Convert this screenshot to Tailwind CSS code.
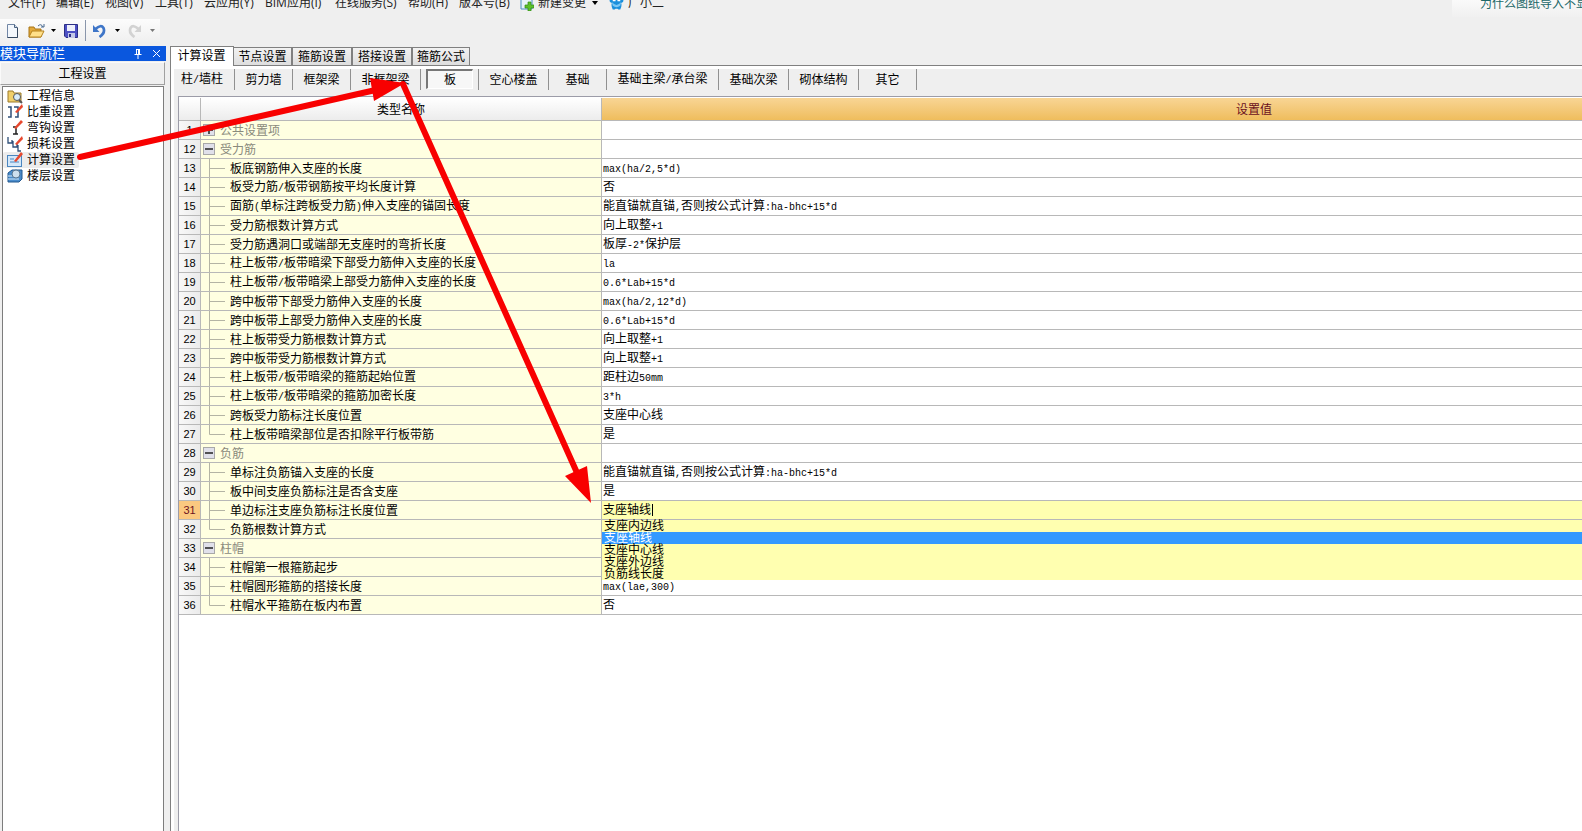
<!DOCTYPE html>
<html lang="zh-CN">
<head>
<meta charset="utf-8">
<title>计算设置</title>
<script src="https://cdn.jsdelivr.net/npm/@tailwindcss/browser@4"></script>
</head>
<body class="relative flex h-screen flex-col overflow-hidden bg-[#efefef] font-['Liberation_Sans','Noto_Sans_CJK_SC',sans-serif] text-xs text-black">

<header class="flex h-[46px] shrink-0 flex-col">
  <div class="flex h-[19px] items-start font-['Open_Sans','Noto_Sans_CJK_SC',sans-serif] text-[#222]">
    <nav class="-mt-[5px] flex h-4 items-center gap-[10px] pl-2 leading-4 whitespace-nowrap">
      <button class="w-[38px] text-left">文件(F)</button>
      <button class="w-[39px] text-left">编辑(E)</button>
      <button class="w-[40px] text-left">视图(V)</button>
      <button class="w-[39px] text-left">工具(T)</button>
      <button class="w-[51px] text-left">云应用(Y)</button>
      <button class="w-[60px] text-left">BIM应用(I)</button>
      <button class="w-[63px] text-left">在线服务(S)</button>
      <button class="w-[41px] text-left">帮助(H)</button>
      <button class="w-[51px] text-left">版本号(B)</button>
      <button class="flex items-center gap-1">
        <svg width="14" height="16" viewBox="0 0 14 16"><path d="M1 0h9l2 3v11H1z" fill="#e6f2fb" stroke="#4b8fc4"/><path d="M8 7h3v3h3v3h-3v3H8v-3H5v-3h3z" fill="#5cc02c" stroke="#2f8a18" stroke-width=".7"/></svg>
        <span>新建变更</span>
        <svg class="ml-[2px]" width="6" height="4" viewBox="0 0 6 4"><path d="M0 0h6L3 4z" fill="#000"/></svg>
      </button>
      <button class="flex items-center gap-1 pl-px">
        <svg width="15" height="16" viewBox="0 0 16 16"><path d="M0 2q8-6 16 0l-1 5-2 1q1 3-1 7l-2 0-1-1H7l-1 1H4q-2-4-1-7L1 7z" fill="#1b8fdc"/><path d="M3 7q5 6 10 0l-1 4q-4 3-8 0z" fill="#7cc8f5"/><path d="M4 5h3M9 5h3" stroke="#fff" stroke-width="2"/></svg>
        <span>广小二</span>
      </button>
    </nav>
    <div class="ml-auto h-[17px] w-[130px] overflow-hidden bg-linear-to-b from-[#fafafa] to-[#f0f0f0] pl-[28px]">
      <a href="#" class="-mt-[4px] block leading-4 whitespace-nowrap text-[#1c6868]">为什么图纸导入不显示</a>
    </div>
  </div>
  <div class="flex h-[23px] w-40 items-center bg-linear-to-b from-[#fcfcfc] to-[#f0f0f0] pl-[6px]">
    <button aria-label="新建"><svg width="14" height="16" viewBox="0 0 14 16"><path d="M1.500 1.500h7l3 3v10h-10z" fill="#f3f7fc" stroke="#7186a5"/><path d="M11.500 5v9.500h-10" stroke="#34475f" fill="none"/><path d="M8.500 1.500v3h3" fill="#cfdcec" stroke="#4c6380"/></svg></button>
    <button class="ml-2 flex items-center gap-[6px]" aria-label="打开"><svg width="17" height="16" viewBox="0 0 17 16"><path d="M1 4h5l1 2h6v8H1z" fill="#e3a93a" stroke="#a87414"/><path d="M4 8h12l-3 6H1z" fill="#ffe08a" stroke="#b5821f"/><path d="M10 3q3-3 5 1M13 4h3V1" fill="none" stroke="#48688f"/></svg><svg width="5" height="3" viewBox="0 0 5 3"><path d="M0 0h5L2.500 3z"/></svg></button>
    <button class="ml-2" aria-label="保存"><svg width="14" height="14" viewBox="0 0 14 14"><path d="M.5.500h13v13H2l-1.500-1.500z" fill="#4d50c4" stroke="#2c2f86"/><path d="M3 1h8v6H3z" fill="#eef0fb"/><path d="M4 9h7v5H4z" fill="#c3c8e8"/><path d="M5 10h2v3H5z" fill="#2c2f86"/></svg></button>
    <span class="mr-[7px] ml-[7px] h-[21px] w-px bg-[#8a96ab]"></span>
    <button class="flex items-center gap-[9px]" aria-label="撤销"><svg width="13" height="14" viewBox="0 0 13 14"><path d="M2.500 5Q8 0 10.500 4q2 5-4 9" fill="none" stroke="#3f76c8" stroke-width="2.700"/><path d="M0 1v7h6.500z" fill="#3f76c8"/></svg><svg width="5" height="3" viewBox="0 0 5 3"><path d="M0 0h5L2.500 3z"/></svg></button>
    <button class="ml-[8px] flex items-center gap-[9px]" aria-label="重做"><svg width="13" height="14" viewBox="0 0 13 14"><path d="M10.500 5Q5 0 2.500 4q-2 5 4 9" fill="none" stroke="#d2d2d2" stroke-width="2.700"/><path d="M13 1v7H6.500z" fill="#d2d2d2"/></svg><svg width="5" height="3" viewBox="0 0 5 3"><path d="M0 0h5L2.500 3z" fill="#777"/></svg></button>
  </div>
</header>

<div class="flex min-h-0 flex-1">
  <aside class="flex w-[166px] shrink-0 flex-col">
    <div class="flex h-[15px] shrink-0 items-center bg-[#0a57de] leading-[15px] text-white">
      <h2 class="text-[13px]">模块导航栏</h2>
      <button class="ml-auto" aria-label="固定"><svg width="8" height="10" viewBox="0 0 8 10"><path d="M2 .5h4M2.500.500v5M5.500.500v5M4.500.500v5M.5 5.500h7M4 6v4" stroke="#fff" fill="none"/></svg></button>
      <button class="mr-[5px] ml-[10px]" aria-label="关闭"><svg width="9" height="9" viewBox="0 0 9 9"><path d="M1 1l7 7M8 1L1 8" stroke="#fff"/></svg></button>
    </div>
    <button class="mt-px mr-px h-[23px] shrink-0 border border-[#fafafa] border-r-[#a0a0a0] border-b-[#a0a0a0] pt-px">工程设置</button>
    <ul id="nav" class="mt-px mr-[2px] ml-[2px] flex-1 border-t border-l border-[#7d7d7d] border-r bg-white pt-px"></ul>
  </aside>

  <main class="ml-1 flex min-w-0 flex-1 flex-col border-l border-[#808080]">
    <div class="flex h-5 shrink-0 items-end border-b border-[#808080]">
      <button class="relative -mb-px h-5 w-[63px] shrink-0 border-t border-r border-[#808080] bg-white pr-px pb-px">计算设置</button>
      <button class="h-[18px] w-[59px] border-t border-r-2 border-[#808080] bg-linear-to-b from-[#f2f2f2] to-[#dedede] pt-px">节点设置</button>
      <button class="h-[18px] w-[60px] border-t border-r-2 border-[#808080] bg-linear-to-b from-[#f2f2f2] to-[#dedede] pt-px">箍筋设置</button>
      <button class="h-[18px] w-[60px] border-t border-r-2 border-[#808080] bg-linear-to-b from-[#f2f2f2] to-[#dedede] pt-px">搭接设置</button>
      <button class="h-[18px] w-[57px] border-t border-r border-[#808080] bg-linear-to-b from-[#f2f2f2] to-[#dedede] pt-px">箍筋公式</button>
    </div>
    <div class="flex min-h-0 flex-1 flex-col border-t-[3px] border-l-[3px] border-white">
      <div id="cats" class="flex h-[27px] shrink-0 items-start whitespace-nowrap"></div>
      <div class="ml-1 min-h-0 flex-1 overflow-hidden border-t border-l border-[#9c9ca8] bg-white pt-px">
        <table class="w-[1727px] table-fixed border-separate border-spacing-0">
          <colgroup><col class="w-[22px]"><col class="w-[401px]"><col></colgroup>
          <thead>
            <tr class="h-[23px]">
              <th class="border-r border-b border-[#b8b8b8] bg-linear-to-b from-white to-[#ececec]"></th>
              <th class="border-r border-b border-[#b8b8b8] bg-linear-to-b from-white to-[#ececec] p-0 pt-px font-normal">类型名称</th>
              <th class="border-b border-[#b8b8b8] bg-linear-to-b from-[#f8d594] to-[#efbd5c] p-0 pt-px font-normal text-[#6b1020]">设置值</th>
            </tr>
          </thead>
          <tbody id="rows"></tbody>
        </table>
      </div>
    </div>
  </main>
</div>

<!-- annotation arrows lie over the window -->
<svg class="pointer-events-none absolute top-0 left-0" width="620" height="520" viewBox="0 0 620 520" fill="#f80000" stroke="#f80000" stroke-linecap="round">
  <path d="M80 157L380 89M403 84L578 475" stroke-width="6" fill="none"/>
  <path d="M370 78L405 83L374 101zM565 476L587 466L591 503z" stroke="none"/>
</svg>

<script>
// Latin runs take half the width of a Chinese character
const mixed = s => s.replace(/[\x21-\x7e]+/g, m => `<span class="font-['Liberation_Mono'] text-[10px]">${m}</span>`);

const navIcons = [
  '<path d="M1 3h5l1 2h7v9H1z" fill="#f0cf6a" stroke="#9c7a2a"/><circle cx="10" cy="9" r="3.500" fill="#d8ecfa" stroke="#555"/><path d="M12 12l3 3" stroke="#555" stroke-width="2"/>',
  '<path d="M1 3h3v10H1M7 3h4v10H8" fill="none" stroke="#2f4f78" stroke-width="1.500"/><path d="M8 8l7-8 1 3-6 6z" fill="#e8482e"/>',
  '<path d="M6 7h3v7M6 14h5" fill="none" stroke="#222" stroke-width="1.500"/><path d="M7 8l7-8 2 2-7 7z" fill="#e8482e"/>',
  '<path d="M1 1v6h4v-3M6 5v6h4v-3M11 9v6h3" fill="none" stroke="#2f4f78" stroke-width="1.300"/><path d="M8 8l7-8 1 3-6 6z" fill="#e8482e"/>',
  '<rect x=".5" y="3.500" width="14" height="11" fill="#d4e8fa" stroke="#4a86c0"/><path d="M3 7h4M3 10h9" stroke="#4a86c0"/><path d="M7 9l7-9 2 2-7 8z" fill="#e8482e"/>',
  '<path d="M1 5l4-3h10v9l-3 3H1z" fill="#4a8ccc" stroke="#23588f"/><path d="M1 8h11M1 11h11" stroke="#d8ecfa"/><circle cx="9" cy="6" r="4" fill="#cfe0ee" stroke="#5a7690"/>'
];
document.getElementById('nav').innerHTML = ['工程信息','比重设置','弯钩设置','损耗设置','计算设置','楼层设置'].map((t, i) =>
  `<li class="h-4"><button class="flex h-4 items-center gap-1 pl-1 leading-4 ${i === 4 ? 'rounded-xs bg-[#ececec] pr-1' : ''}"><svg width="16" height="16" viewBox="0 0 16 16">${navIcons[i]}</svg><span>${t}</span></button></li>`).join('');

document.getElementById('cats').innerHTML = [
  ['柱/墙柱','w-[61px] pr-1'],['剪力墙','w-[58px]'],['框架梁','w-[58px]'],['非框架梁','w-[70px]'],['板','w-[58px]'],['空心楼盖','w-[70px]'],
  ['基础','w-[58px]'],['基础主梁/承台梁','w-[112px]'],['基础次梁','w-[70px]'],['砌体结构','w-[70px]'],['其它','w-[58px]']
].map(([t, w]) => `<div class="h-[21px] shrink-0 border-r border-[#909090] ${w}">${t === '板'
  ? '<button class="mx-auto block h-5 w-[47px] border-t-2 border-l-2 border-[#777] border-r border-b border-r-white border-b-white bg-[#f7f7f7]">板</button>'
  : `<button class="h-[21px] w-full">${mixed(t)}</button>`}</div>`).join('');

const data = [
  [1,'+公共设置项',''],[12,'-受力筋',''],
  [13,'板底钢筋伸入支座的长度','max(ha/2,5*d)'],[14,'板受力筋/板带钢筋按平均长度计算','否'],
  [15,'面筋(单标注跨板受力筋)伸入支座的锚固长度','能直锚就直锚,否则按公式计算:ha-bhc+15*d'],
  [16,'受力筋根数计算方式','向上取整+1'],[17,'受力筋遇洞口或端部无支座时的弯折长度','板厚-2*保护层'],
  [18,'柱上板带/板带暗梁下部受力筋伸入支座的长度','la'],[19,'柱上板带/板带暗梁上部受力筋伸入支座的长度','0.6*Lab+15*d'],
  [20,'跨中板带下部受力筋伸入支座的长度','max(ha/2,12*d)'],[21,'跨中板带上部受力筋伸入支座的长度','0.6*Lab+15*d'],
  [22,'柱上板带受力筋根数计算方式','向上取整+1'],[23,'跨中板带受力筋根数计算方式','向上取整+1'],
  [24,'柱上板带/板带暗梁的箍筋起始位置','距柱边50mm'],[25,'柱上板带/板带暗梁的箍筋加密长度','3*h'],
  [26,'跨板受力筋标注长度位置','支座中心线'],[27,'柱上板带暗梁部位是否扣除平行板带筋','是'],
  [28,'-负筋',''],[29,'单标注负筋锚入支座的长度','能直锚就直锚,否则按公式计算:ha-bhc+15*d'],
  [30,'板中间支座负筋标注是否含支座','是'],[31,'单边标注支座负筋标注长度位置','支座轴线'],[32,'负筋根数计算方式',''],
  [33,'-柱帽',''],[34,'柱帽第一根箍筋起步',''],[35,'柱帽圆形箍筋的搭接长度','max(lae,300)'],[36,'柱帽水平箍筋在板内布置','否']
];
const editor = `<div class="relative h-[18px] bg-[#ffffb0]"><input aria-label="单边标注支座负筋标注长度位置" value="支座轴线" class="block h-[18px] w-full bg-transparent pb-px pl-px outline-none">
  <span class="absolute top-[3px] left-[50px] h-3 w-px bg-black"></span>
  <div role="listbox" aria-label="标注长度位置选项" class="absolute top-[19px] left-0 z-10 w-full bg-[#ffffb0]">${['支座内边线','支座轴线','支座中心线','支座外边线','负筋线长度'].map((o, i) =>
    `<button role="option" aria-selected="${i === 1}" class="block h-3 w-full pl-[2px] text-left leading-[13px] ${i === 1 ? 'bg-[#3399ff] text-white' : ''}">${o}</button>`).join('')}</div></div>`;
document.getElementById('rows').innerHTML = data.map(([n, t, v], i) => {
  const group = /^[+-]/.test(t), next = data[i + 1], last = !next || /^[+-]/.test(next[1]);
  const name = group
    ? `<div class="flex h-[18px] items-center pl-[2px] text-[#8a8a7c]"><button aria-label="展开或折叠" class="mr-[5px] flex size-3 items-center justify-center border border-[#a8a8a8] bg-[#e0e0ea]"><svg width="8" height="8" viewBox="0 0 8 8"><path d="${t[0] === '+' ? 'M0 4h8M4 0v8' : 'M0 4h8'}" stroke="#222" stroke-width="1.500"/></svg></button><span class="pt-[2px]">${t.slice(1)}</span></div>`
    : `<div class="flex h-[18px] items-center pl-2"><svg class="mr-[5px] block shrink-0" width="16" height="18" viewBox="0 0 16 18"><path d="${last ? 'M.5 0v9.500H16' : 'M.5 0v18M.5 9.500H16'}" fill="none" stroke="#b4b4a4"/></svg><span class="pt-[2px] whitespace-nowrap">${mixed(t)}</span></div>`;
  return `<tr class="h-[19px]">
    <td class="border-r border-b border-[#b8b8b8] p-0 text-center text-[11px] leading-[18px] ${n === 31 ? 'bg-[#fbc980] text-[#6b1020]' : 'bg-linear-to-r from-[#f8f8f8] to-[#ebebeb]'}">${n}</td>
    <td class="border-r border-b border-[#b8b8b8] bg-[#ffffe1] p-0 leading-[18px]">${name}</td>
    <td class="border-b border-[#b8b8b8] p-0 leading-[18px]">${n === 31 ? editor : `<div class="h-[18px] pl-px leading-[18px]">${mixed(v)}</div>`}</td></tr>`;
}).join('');
</script>
</body>
</html>
